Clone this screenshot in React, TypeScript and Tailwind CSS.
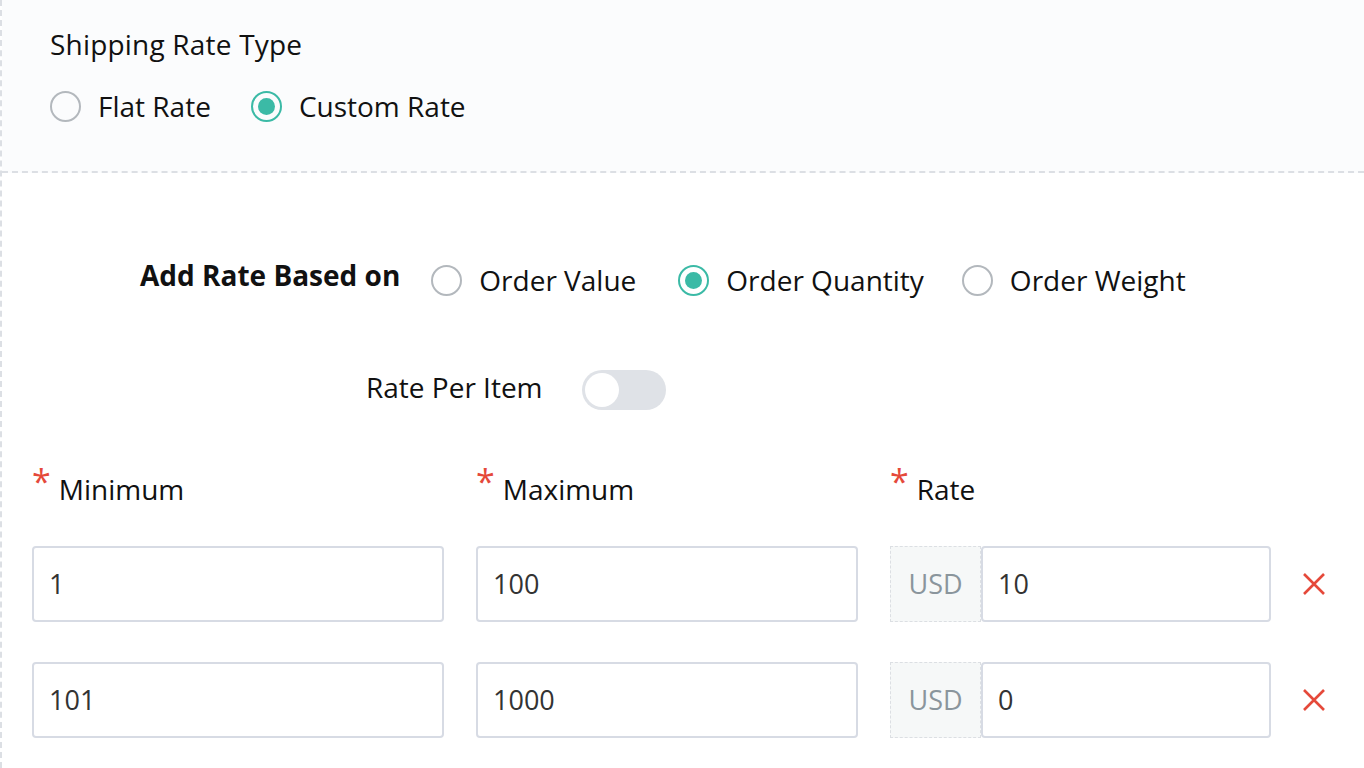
const font = { fontFamily: '"Open Sans", Lato, sans-serif' };

function Radio({ checked, label }: { checked?: boolean; label: string }) {
  return (
    <div className="flex items-center">
      <span
        className={
          checked
            ? 'w-[31px] h-[31px] rounded-full border-2 border-[#3bbaa6] flex items-center justify-center'
            : 'w-[31px] h-[31px] rounded-full border-2 border-[#b3b8bd]'
        }
      >
        {checked && <span className="w-[17px] h-[17px] rounded-full bg-[#3bbaa6]" />}
      </span>
      <span className="ml-[17px] text-[28px] leading-[34px] text-[#111]">{label}</span>
    </div>
  );
}

function Label({ text }: { text: string }) {
  return (
    <div className="flex items-start">
      <span className="text-[#e5493a] text-[34px] leading-none mt-[-6px] mr-[8px]">*</span>
      <span className="text-[28px] text-[#111] leading-[34px] mt-[2px]">{text}</span>
    </div>
  );
}

function Field({ value, width }: { value: string; width: string }) {
  return (
    <div className={`${width} h-[76px] border-2 border-[#d7dbe4] rounded-[4px] bg-white flex items-center px-[15px] text-[27px] text-[#333]`}>
      {value}
    </div>
  );
}

function RateRow({ min, max, rate }: { min: string; max: string; rate: string }) {
  return (
    <div className="flex items-center">
      <Field value={min} width="w-[412px]" />
      <div className="ml-[32px]">
        <Field value={max} width="w-[382px]" />
      </div>
      <div className="ml-[32px] flex items-center">
        <div className="w-[91px] h-[76px] bg-[#f6f8f8] border border-dashed border-[#dcdfe3] flex items-center justify-center text-[27px] text-[#8a959c]">
          USD
        </div>
        <Field value={rate} width="w-[290px]" />
      </div>
      <svg className="ml-[31px]" width="24" height="24" viewBox="0 0 24 24">
        <path d="M2 2 L22 22 M22 2 L2 22" stroke="#e5493a" strokeWidth="2.6" />
      </svg>
    </div>
  );
}

export default function App() {
  return (
    <div style={font} className="w-[1364px] h-[768px] bg-white border-l-2 border-dashed border-[#dcdfe4] overflow-hidden">
      <div className="h-[173px] bg-[#fbfcfd] border-b-2 border-dashed border-[#dcdfe4] pl-[48px] pt-[27px]">
        <div className="text-[28px] text-[#111] leading-[34px] tracking-[0.2px]">Shipping Rate Type</div>
        <div className="flex items-center gap-[40px] mt-[28px]">
          <Radio label="Flat Rate" />
          <Radio checked label="Custom Rate" />
        </div>
      </div>

      <div className="pl-[30px]">
        <div className="flex items-center mt-[90px] pl-[108px]">
          <span className="text-[28px] leading-[34px] font-bold text-[#111] mt-[-10px]">Add Rate Based on</span>
          <div className="flex items-center ml-[31px]">
            <Radio label="Order Value" />
            <div className="ml-[42px]"><Radio checked label="Order Quantity" /></div>
            <div className="ml-[38px]"><Radio label="Order Weight" /></div>
          </div>
        </div>

        <div className="flex items-center mt-[73px] pl-[334px]">
          <span className="text-[28px] leading-[34px] text-[#111] mt-[-6px]">Rate Per Item</span>
          <div className="ml-[39px] w-[84px] h-[40px] rounded-full bg-[#dfe2e7] flex items-center px-[3px]">
            <span className="w-[34px] h-[34px] rounded-full bg-white" />
          </div>
        </div>

        <div className="flex mt-[60px]">
          <div className="w-[444px]"><Label text="Minimum" /></div>
          <div className="w-[414px]"><Label text="Maximum" /></div>
          <div><Label text="Rate" /></div>
        </div>

        <div className="mt-[40px]">
          <RateRow min="1" max="100" rate="10" />
        </div>
        <div className="mt-[40px]">
          <RateRow min="101" max="1000" rate="0" />
        </div>
      </div>
    </div>
  );
}
